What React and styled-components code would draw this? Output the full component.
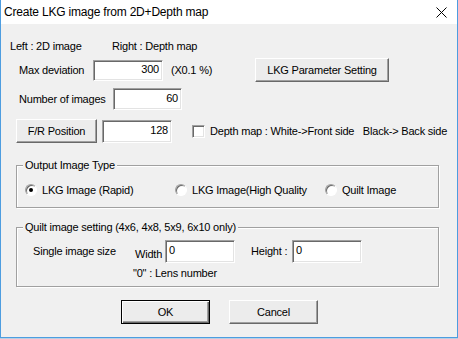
import React from "react";
import styled, { createGlobalStyle } from "styled-components";

const GlobalStyle = createGlobalStyle`
  html, body {
    margin: 0;
    padding: 0;
    background: #b9cfe3;
  }
`;

const Window = styled.div`
  width: 458px;
  height: 338px;
  box-sizing: border-box;
  border: 1px solid #4d9de0;
  border-top: none;
  background: #f0f0f0;
  display: flex;
  flex-direction: column;
  font-family: "Liberation Sans", Arial, sans-serif;
  font-size: 11px;
  letter-spacing: -0.2px;
  color: #000;
`;

const TitleBar = styled.div`
  height: 24px;
  background: #fff;
  display: flex;
  align-items: center;
  justify-content: space-between;
  padding: 0 10px 0 3px;
  flex-shrink: 0;
`;

const Title = styled.span`
  font-size: 12px;
  font-family: "Liberation Sans", Arial, sans-serif;
  padding-bottom: 1px;
`;

const Body = styled.div`
  padding-top: 16px;
  display: flex;
  flex-direction: column;
`;

const Row = styled.div`
  display: flex;
  align-items: center;
  height: ${(p) => p.$h}px;
  margin-top: ${(p) => p.$mt || 0}px;
`;

const Label = styled.span`
  display: inline-block;
  line-height: 13px;
  white-space: nowrap;
  margin-left: ${(p) => p.$ml || 0}px;
  width: ${(p) => (p.$w ? `${p.$w}px` : "auto")};
  align-self: ${(p) => p.$self || "auto"};
  margin-bottom: ${(p) => p.$mb || 0}px;
`;

const Field = styled.div`
  box-sizing: border-box;
  width: ${(p) => p.$w}px;
  height: ${(p) => p.$h || 21}px;
  margin-left: ${(p) => p.$ml || 0}px;
  background: #fff;
  border-top: 1px solid #a0a0a0;
  border-left: 1px solid #a0a0a0;
  border-bottom: 1px solid #fff;
  border-right: 1px solid #fff;
  box-shadow: inset 1px 1px 0 #696969, inset -1px -1px 0 #e3e3e3;
  display: flex;
  align-items: ${(p) => (p.$top ? "flex-start" : "center")};
  justify-content: ${(p) => (p.$left ? "flex-start" : "flex-end")};
  padding: ${(p) => (p.$top ? "3px 0 0 3px" : "0 3px 1px 3px")};
  line-height: 13px;
  flex-shrink: 0;
`;

const Button = styled.button`
  box-sizing: border-box;
  width: ${(p) => p.$w}px;
  height: 24px;
  margin: 0 0 0 ${(p) => p.$ml || 0}px;
  padding: 0;
  font: inherit;
  letter-spacing: inherit;
  color: #000;
  background: #ececec;
  border-top: 1px solid ${(p) => (p.$default ? "#000" : "#fff")};
  border-left: 1px solid ${(p) => (p.$default ? "#000" : "#fff")};
  border-bottom: 1px solid ${(p) => (p.$default ? "#000" : "#696969")};
  border-right: 1px solid ${(p) => (p.$default ? "#000" : "#696969")};
  box-shadow: ${(p) =>
    p.$default
      ? "inset 1px 1px 0 #fff, inset -1px -1px 0 #696969, inset -2px -2px 0 #a0a0a0"
      : "inset -1px -1px 0 #a0a0a0"};
  flex-shrink: 0;
`;

const Check = styled.span`
  box-sizing: border-box;
  width: 13px;
  height: 13px;
  margin-left: ${(p) => p.$ml || 0}px;
  background: #fff;
  border-top: 1px solid #a0a0a0;
  border-left: 1px solid #a0a0a0;
  border-bottom: 1px solid #fff;
  border-right: 1px solid #fff;
  box-shadow: inset 1px 1px 0 #696969, inset -1px -1px 0 #e3e3e3;
  flex-shrink: 0;
`;

const Group = styled.fieldset`
  box-sizing: border-box;
  width: 423px;
  margin: ${(p) => p.$mt}px 0 0 15px;
  padding: 0 0 ${(p) => p.$pb}px 0;
  border: 1px solid #a0a0a0;
  box-shadow: inset 1px 1px 0 #fff, 1px 1px 0 #fff;
  min-width: 0;
`;

const Legend = styled.legend`
  margin-left: 6px;
  padding: 0 2px;
  line-height: 13px;
  background: #f0f0f0;
`;

const RadioItem = styled.label`
  display: flex;
  align-items: center;
  width: ${(p) => p.$w}px;
  margin-left: ${(p) => p.$ml || 0}px;
`;

const RadioDot = styled.span`
  box-sizing: border-box;
  width: 12px;
  height: 12px;
  border-radius: 50%;
  background: #fff;
  border: 1px solid;
  border-color: #a0a0a0 #fff #fff #a0a0a0;
  box-shadow: inset 1px 1px 0 #696969;
  display: flex;
  align-items: center;
  justify-content: center;
  flex-shrink: 0;

  &::after {
    content: "";
    width: 4px;
    height: 4px;
    border-radius: 50%;
    background: ${(p) => (p.$on ? "#000" : "transparent")};
  }
`;

const Radio = ({ on, w, ml, children }) => (
  <RadioItem $w={w} $ml={ml}>
    <RadioDot $on={on} />
    <Label $ml={5}>{children}</Label>
  </RadioItem>
);

export default function App() {
  return (
    <>
      <GlobalStyle />
      <Window>
        <TitleBar>
          <Title>Create LKG image from 2D+Depth map</Title>
          <svg width="11" height="11" viewBox="0 0 11 11">
            <path d="M0.5 0.5 L10.5 10.5 M10.5 0.5 L0.5 10.5" stroke="#000" strokeWidth="1" />
          </svg>
        </TitleBar>
        <Body>
          <Row $h={13}>
            <Label $ml={9} $w={102}>Left : 2D image</Label>
            <Label>Right : Depth map</Label>
          </Row>
          <Row $h={24} $mt={5}>
            <Label $ml={18} $w={74}>Max deviation</Label>
            <Field $w={70}>300</Field>
            <Label $ml={8} $w={84}>(X0.1 %)</Label>
            <Button $w={134}>LKG Parameter Setting</Button>
          </Row>
          <Row $h={22} $mt={6}>
            <Label $ml={18} $w={94}>Number of images</Label>
            <Field $w={69} $h={22}>60</Field>
          </Row>
          <Row $h={24} $mt={9}>
            <Button $ml={15} $w={81}>F/R Position</Button>
            <Field $ml={5} $w={70} $h={23}>128</Field>
            <Check $ml={20} />
            <Label $ml={5}>Depth map : White-&gt;Front side&nbsp;&nbsp; Black-&gt; Back side</Label>
          </Row>
          <Group $mt={16} $pb={9}>
            <Legend>Output Image Type</Legend>
            <Row $h={16} $mt={10}>
              <Radio on w={150} ml={8}>LKG Image (Rapid)</Radio>
              <Radio w={150}>LKG Image(High Quality</Radio>
              <Radio w={100}>Quilt Image</Radio>
            </Row>
          </Group>
          <Group $mt={13} $pb={6}>
            <Legend>Quilt image setting (4x6, 4x8, 5x9, 6x10 only)</Legend>
            <Row $h={23} $mt={6}>
              <Label $ml={16} $w={102}>Single image size</Label>
              <Label $w={30} $self="flex-end" $mb={2}>Width</Label>
              <Field $w={70} $h={23} $left $top>0</Field>
              <Label $ml={16} $w={41}>Height :</Label>
              <Field $w={70} $h={23} $left $top>0</Field>
            </Row>
            <Row $h={13} $mt={4}>
              <Label $ml={116}>"0" : Lens number</Label>
            </Row>
          </Group>
          <Row $h={24} $mt={13}>
            <Button $default $ml={120} $w={89}>OK</Button>
            <Button $ml={19} $w={89}>Cancel</Button>
          </Row>
        </Body>
      </Window>
    </>
  );
}
